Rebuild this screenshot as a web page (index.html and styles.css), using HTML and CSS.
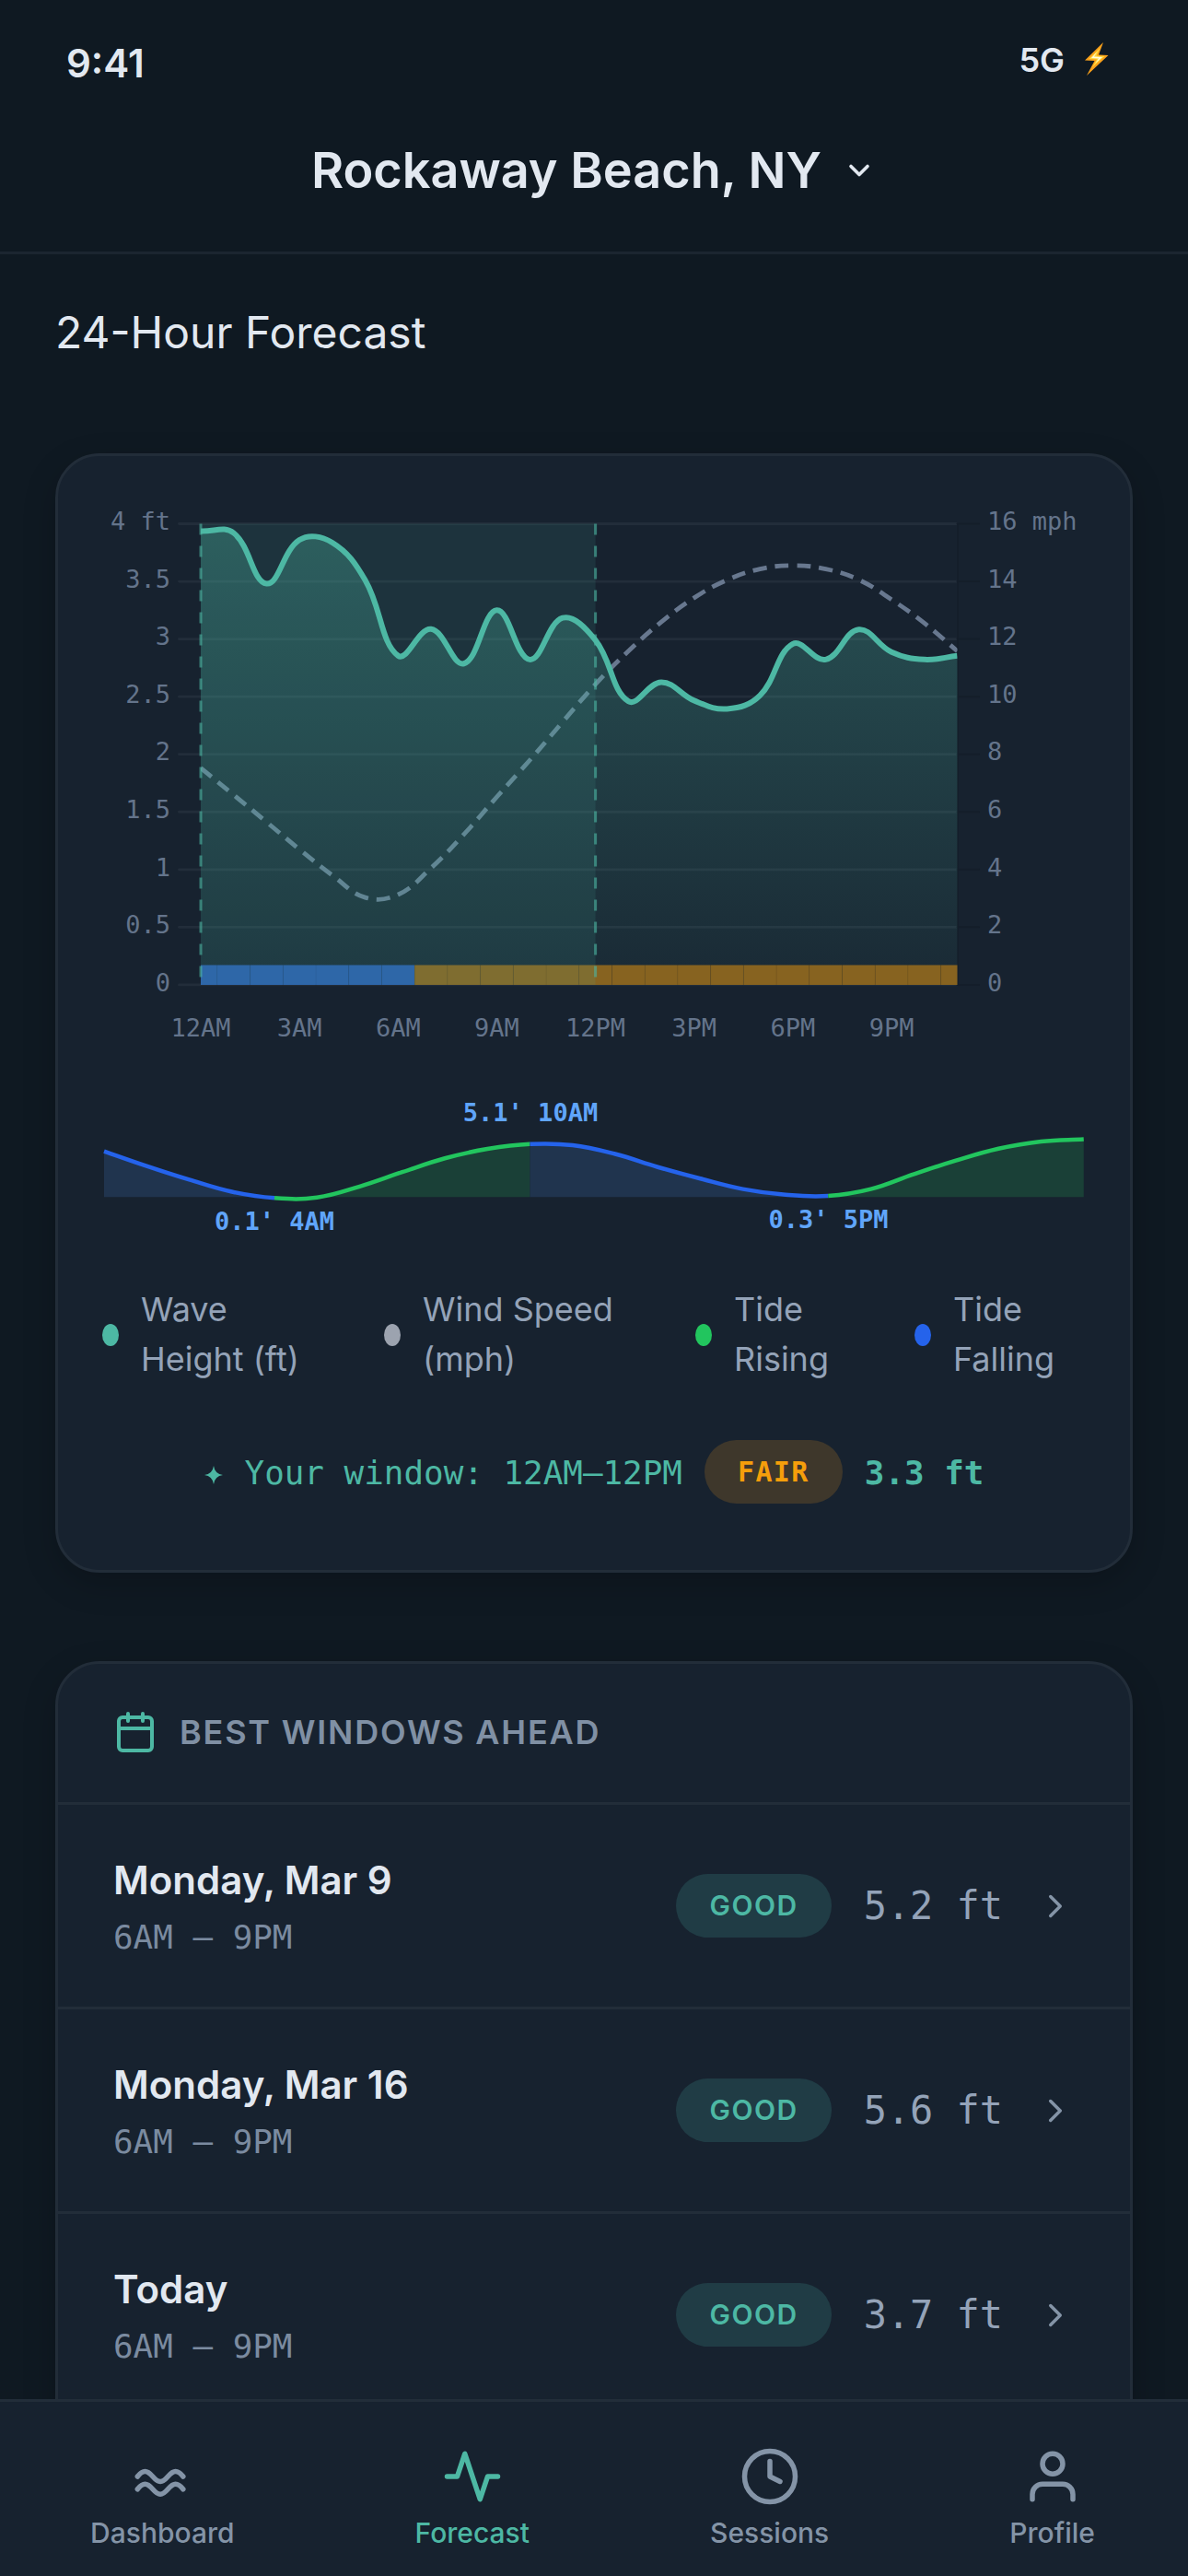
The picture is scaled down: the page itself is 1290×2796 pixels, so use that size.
FILE: index.html
```html
<!DOCTYPE html>
<html lang="en">
<head>
<meta charset="utf-8">
<title>Surf Forecast</title>
<link rel="stylesheet" href="styles.css">
</head>
<body>
<div class="screen">
  <div class="status">
    <span class="status-time">9:41</span>
    <span class="status-right">5G
      <svg class="bolt" viewBox="0 0 26 36"><path d="M20 0 0 19.500l10.500.500L2 36l23.500-22-10.500-.500z" fill="#f9a01b"/><path d="M16.500 6 4.500 18l8.500.500L8 27l13.500-12-9-.500z" fill="#ffd93b"/><path d="M13 10.500 7 17l8 .500-3.500 5 7.500-6.500-9-.500z" fill="#fffbe0"/></svg>
    </span>
  </div>
  <header class="topbar">
    <h1>Rockaway Beach, NY</h1>
    <svg class="caret" viewBox="0 0 24 24"><path d="m6 9 6 6 6-6"/></svg>
  </header>

  <main class="content">
    <h2>24-Hour Forecast</h2>

    <section class="card chart-card">
      <svg class="chart" id="chart" viewBox="0 0 1068 816">
        <defs>
          <linearGradient id="waveFill" gradientUnits="userSpaceOnUse" x1="0" y1="18" x2="0" y2="519">
            <stop offset="0" stop-color="#4db8a4" stop-opacity=".33"/>
            <stop offset="1" stop-color="#4db8a4" stop-opacity=".05"/>
          </linearGradient>
          <clipPath id="plotClip"><rect x="107" y="10" width="821.5" height="510"/></clipPath>
        </defs>
      </svg>

      <ul class="legend">
        <li><i class="dot wave"></i><span>Wave<br>Height (ft)</span></li>
        <li><i class="dot wind"></i><span>Wind Speed<br>(mph)</span></li>
        <li><i class="dot rising"></i><span>Tide<br>Rising</span></li>
        <li><i class="dot falling"></i><span>Tide<br>Falling</span></li>
      </ul>

      <div class="window-line">
        <svg class="star" viewBox="0 0 20 20"><path d="M10 0q1.200 8.800 10 10-8.800 1.200-10 10-1.200-8.800-10-10 8.800-1.200 10-10z"/></svg>
        <span class="mono">Your window: 12AM–12PM</span>
        <span class="pill fair">FAIR</span>
        <b class="mono">3.3 ft</b>
      </div>
    </section>

    <section class="card list-card">
      <div class="list-head">
        <svg viewBox="0 0 24 24"><rect x="3" y="4" width="18" height="18" rx="2"/><path d="M16 2v4M8 2v4M3 10h18"/></svg>
        <h3>BEST WINDOWS AHEAD</h3>
      </div>
      <div class="row">
        <div class="when"><strong>Monday, Mar 9</strong><span>6AM – 9PM</span></div>
        <span class="pill good">GOOD</span><span class="size">5.2 ft</span>
        <svg class="next" viewBox="0 0 24 24"><path d="m9 18 6-6-6-6"/></svg>
      </div>
      <div class="row">
        <div class="when"><strong>Monday, Mar 16</strong><span>6AM – 9PM</span></div>
        <span class="pill good">GOOD</span><span class="size">5.6 ft</span>
        <svg class="next" viewBox="0 0 24 24"><path d="m9 18 6-6-6-6"/></svg>
      </div>
      <div class="row last">
        <div class="when"><strong>Today</strong><span>6AM – 9PM</span></div>
        <span class="pill good">GOOD</span><span class="size">3.7 ft</span>
        <svg class="next" viewBox="0 0 24 24"><path d="m9 18 6-6-6-6"/></svg>
      </div>
    </section>
  </main>

  <nav class="tabs">
    <a><svg viewBox="0 0 24 24"><path d="M2.300 12c1-1.300 2-2 3-2 2.500 0 3.500 4 6 4s3.500-4 6-4c1 0 2 .7 3 2M2.300 17c1-1.300 2-2 3-2 2.500 0 3.500 4 6 4s3.500-4 6-4c1 0 2 .7 3 2"/></svg>Dashboard</a>
    <a class="active"><svg viewBox="0 0 24 24"><path d="M22 12h-4l-3 9L9 3l-3 9H2"/></svg>Forecast</a>
    <a><svg viewBox="0 0 24 24"><circle cx="12" cy="12" r="10"/><path d="M12 6v6l4 2"/></svg>Sessions</a>
    <a><svg viewBox="0 0 24 24"><path d="M20 21v-2a4 4 0 0 0-4-4H8a4 4 0 0 0-4 4v2"/><circle cx="12" cy="7" r="4"/></svg>Profile</a>
  </nav>
</div>
<script src="chart.js"></script>
</body>
</html>
```
FILE: styles.css
```css
* { box-sizing: border-box; margin: 0; padding: 0; }

body {
  background: #0f1922;
  color: #e2e8f0;
  font-family: "Inter", sans-serif;
}

.screen {
  width: 1290px;
  height: 2796px;
  overflow: hidden;
  display: flex;
  flex-direction: column;
}

svg { display: block; fill: none; stroke: currentColor; stroke-width: 2; stroke-linecap: round; stroke-linejoin: round; flex: none; }

.mono, .when span, .size, .fair, .axis, .tide-label { font-family: "DejaVu Sans Mono", monospace; }

.status {
  height: 132px;
  padding: 0 86px 0 72px;
  display: flex;
  justify-content: space-between;
}
.status-time { font-size: 42px; font-weight: 600; line-height: 138px; }
.status-right { font-size: 36px; font-weight: 600; line-height: 130px; display: flex; gap: 22px; align-items: flex-start; }
.bolt { width: 26px; height: 36px; margin-top: 46px; stroke: none; }

.topbar {
  height: 144px;
  flex: none;
  padding-bottom: 36px;
  border-bottom: 3px solid #1b2530;
  display: flex;
  align-items: center;
  justify-content: center;
  gap: 24px;
}
.topbar h1 { font-size: 54px; font-weight: 600; line-height: 66px; }
.caret { width: 36px; height: 36px; margin: 0 1px 0 -1px; stroke-width: 2.4; }

.content { flex: 1; min-height: 0; overflow: hidden; padding: 49px 60px 0; }
h2 { font-size: 48px; font-weight: 400; line-height: 72px; margin-bottom: 95px; }

.card {
  background: #17222f;
  border: 3px solid #222d39;
  border-radius: 48px;
  box-shadow: 0 12px 36px rgba(0, 0, 0, .2);
}

.chart-card { height: 1215px; padding: 55px 48px 0; }
.chart { width: 1068px; height: 816px; overflow: visible; stroke: none; }
.axis { font-size: 27px; fill: #64748b; }
.tide-label { font-size: 27px; font-weight: 700; fill: #60a5fa; }

.legend {
  list-style: none;
  display: grid;
  grid-template-columns: 306px 338px 238px auto;
  margin-top: 28px;
  font-size: 36px;
  line-height: 54px;
  color: #94a3b8;
}
.legend li { display: flex; align-items: center; gap: 24px; }
.dot { width: 18px; height: 24px; margin-top: 2px; border-radius: 50%; }
.dot.wave { background: #4db8a4; }
.dot.wind { background: #9ca3af; }
.dot.rising { background: #22c55e; }
.dot.falling { background: #2563eb; }

.window-line {
  margin-top: 61px;
  display: flex;
  align-items: center;
  justify-content: center;
  gap: 24px;
  font-size: 35.9px;
  color: #4db8a4;
}
.window-line .mono { margin-top: 2px; }
.star { width: 20px; height: 20px; fill: currentColor; stroke: none; margin-top: 6px; }

.pill { height: 69px; border-radius: 35px; padding: 0 36px; font-size: 30px; font-weight: 600; line-height: 69px; }
.fair { background: #3e372b; color: #f59e0b; font-weight: 700; letter-spacing: 1.4px; }
.good { background: #203c45; color: #4db8a4; letter-spacing: 1.5px; }

.list-card { margin-top: 96px; overflow: hidden; }
.list-head { height: 153px; padding: 0 60px 2px; display: flex; align-items: center; gap: 24px; border-bottom: 3px solid #222d39; }
.list-head svg { width: 48px; height: 48px; color: #4db8a4; }
.list-head h3 { font-size: 36px; font-weight: 600; letter-spacing: 1.8px; color: #8090a4; }

.row { height: 222px; padding: 0 60px; display: flex; align-items: center; gap: 36px; border-bottom: 3px solid #222d39; }
.row.last { height: 290px; padding-bottom: 71px; border-bottom: 0; }
.when { flex: 1; display: flex; flex-direction: column; margin-top: 1px; }
.when strong { font-size: 42px; font-weight: 600; line-height: 63px; }
.when span { font-size: 35.9px; line-height: 54px; color: #7b8ba0; margin-top: 4px; }
.size { font-size: 41.900px; color: #94a3b8; margin: 0 0 0 -1px; }
.next { width: 42px; height: 42px; color: #8494a7; }

.tabs {
  height: 192px;
  flex: none;
  border-top: 3px solid #222d39;
  background: #17222f;
  display: flex;
  justify-content: space-around;
  padding: 48px 3px 0 0;
}
.tabs a { display: flex; flex-direction: column; align-items: center; gap: 10px; font-size: 30px; font-weight: 500; line-height: 36px; color: #8494a7; }
.tabs svg { width: 66px; height: 66px; }
.tabs .active { color: #4db8a4; }
```
FILE: chart.js
```js
const waves = [3.936, 3.92, 3.48, 3.86, 3.836, 3.51, 2.855, 3.087, 2.787, 3.25, 2.822, 3.183, 2.99, 2.46, 2.626, 2.466, 2.394, 2.51, 2.958, 2.822, 3.083, 2.887, 2.822, 2.855];
const winds = [7.52, 6.59, 5.65, 4.7, 3.8, 3.03, 3.13, 4.05, 5.22, 6.52, 7.79, 9.12, 10.43, 11.58, 12.59, 13.43, 14.05, 14.43, 14.55, 14.43, 14.06, 13.37, 12.55, 11.58];
const tides = [4.43, 3.06, 1.8, .68, .1, .15, 1.17, 2.5, 3.78, 4.65, 5.1, 5, 4.18, 2.97, 1.9, .93, .4, .3, .93, 2.3, 3.57, 4.67, 5.34, 5.55];

const chart = document.getElementById('chart');
const L = 107, R = 928.5, T = 18.5, B = 518.9;
const hourX = h => L + h * (R - L) / 23;

function add(tag, attrs, text) {
  const el = document.createElementNS('http://www.w3.org/2000/svg', tag);
  for (const k in attrs) el.setAttribute(k, attrs[k]);
  if (text) el.textContent = text;
  chart.appendChild(el);
}

// Cubic segments through the points, smoothed with the given tension.
function segments(pts, tension = .4) {
  const ctl = pts.map((p, i) => {
    const a = pts[i - 1] || p, b = pts[i + 1] || p;
    const d0 = Math.hypot(p[0] - a[0], p[1] - a[1]), d1 = Math.hypot(b[0] - p[0], b[1] - p[1]);
    const f0 = tension * d0 / (d0 + d1), f1 = tension * d1 / (d0 + d1);
    const dx = b[0] - a[0], dy = b[1] - a[1];
    return [p[0] - f0 * dx, p[1] - f0 * dy, p[0] + f1 * dx, p[1] + f1 * dy];
  });
  return pts.slice(1).map((p, i) =>
    `C${[ctl[i][2], ctl[i][3], ctl[i + 1][0], ctl[i + 1][1], p[0], p[1]].map(n => n.toFixed(2)).join(' ')}`);
}

const wavePts = waves.map((v, i) => [hourX(i), B - v * (B - T) / 4]);
const windPts = winds.map((v, i) => [hourX(i), B - v * (B - T) / 16]);
const wavePath = `M${wavePts[0]}` + segments(wavePts).join('');
const windPath = `M${windPts[0]}` + segments(windPts).join('');

for (let i = 0; i <= 8; i++) {
  const y = B - i * (B - T) / 8;
  add('path', { d: `M83.500 ${y}H${R}`, stroke: '#222d3a', 'stroke-width': 2.8 });
  add('path', { d: `M${R} ${y}H952`, stroke: '#141e2a', 'stroke-width': 2 });
  add('text', { class: 'axis', x: 74, y: y + 6.7, 'text-anchor': 'end' }, i === 8 ? '4 ft' : String(i / 2));
  add('text', { class: 'axis', x: 961, y: y + 6.7 }, i === 8 ? '16 mph' : String(i * 2));
}
add('path', { d: `M${R + .5} ${T}V${B}`, stroke: '#141e2a', 'stroke-width': 2 });
['12AM', '3AM', '6AM', '9AM', '12PM', '3PM', '6PM', '9PM'].forEach((t, i) =>
  add('text', { class: 'axis', x: hourX(i * 3), y: 574.6, 'text-anchor': 'middle' }, t));

add('path', { d: windPath, fill: 'none', stroke: '#68788f', 'stroke-width': 4.8, 'stroke-linecap': 'butt', 'stroke-dasharray': '15 9', 'clip-path': 'url(#plotClip)' });
add('path', { d: `${wavePath}L${R} ${B}L${L} ${B}Z`, fill: 'url(#waveFill)' });

// Rating strip under the plot, one cell per hour.
for (let h = 0; h < 24; h++) {
  const x0 = Math.max(L, hourX(h - .5)), x1 = Math.min(R, hourX(h + .5));
  add('rect', { x: x0, y: 497.5, width: x1 - x0, height: 21.5, fill: h < 7 ? '#2b5da9' : '#876320' });
  if (h) add('path', { d: `M${x0} 497.500V519`, stroke: '#000', 'stroke-opacity': .07, 'stroke-width': 1 });
}

add('rect', { x: L, y: T, width: hourX(12) - L, height: B - T, fill: '#4db8a4', 'fill-opacity': .12 });
[0, 12].forEach(h => add('path', { d: `M${hourX(h)} ${T}V${B}`, stroke: '#4db8a4', 'stroke-opacity': .6, 'stroke-width': 3, 'stroke-linecap': 'butt', 'stroke-dasharray': '12 12' }));
add('path', { d: wavePath, fill: 'none', stroke: '#4db8a4', 'stroke-width': 6, 'clip-path': 'url(#plotClip)', 'stroke-linecap': 'butt' });

const tidePts = tides.map((v, i) => [2 + i * 46.25, 751.5 - 11.71 * v]);
const tideSegs = segments(tidePts);
[[0, 4, false], [4, 10, true], [10, 17, false], [17, 23, true]].forEach(([a, b, rising]) => {
  const d = `M${tidePts[a]}` + tideSegs.slice(a, b).join('');
  add('path', { d: `${d}V749.300H${tidePts[a][0]}Z`, fill: rising ? '#1a4037' : '#20344e' });
  add('path', { d, fill: 'none', stroke: rising ? '#22c55e' : '#2563eb', 'stroke-width': 4.5, 'stroke-linecap': 'butt' });
});
add('text', { class: 'tide-label', x: 187, y: 785, 'text-anchor': 'middle' }, "0.1' 4AM");
add('text', { class: 'tide-label', x: 465, y: 667, 'text-anchor': 'middle' }, "5.1' 10AM");
add('text', { class: 'tide-label', x: 788.5, y: 782.5, 'text-anchor': 'middle' }, "0.3' 5PM");
```
